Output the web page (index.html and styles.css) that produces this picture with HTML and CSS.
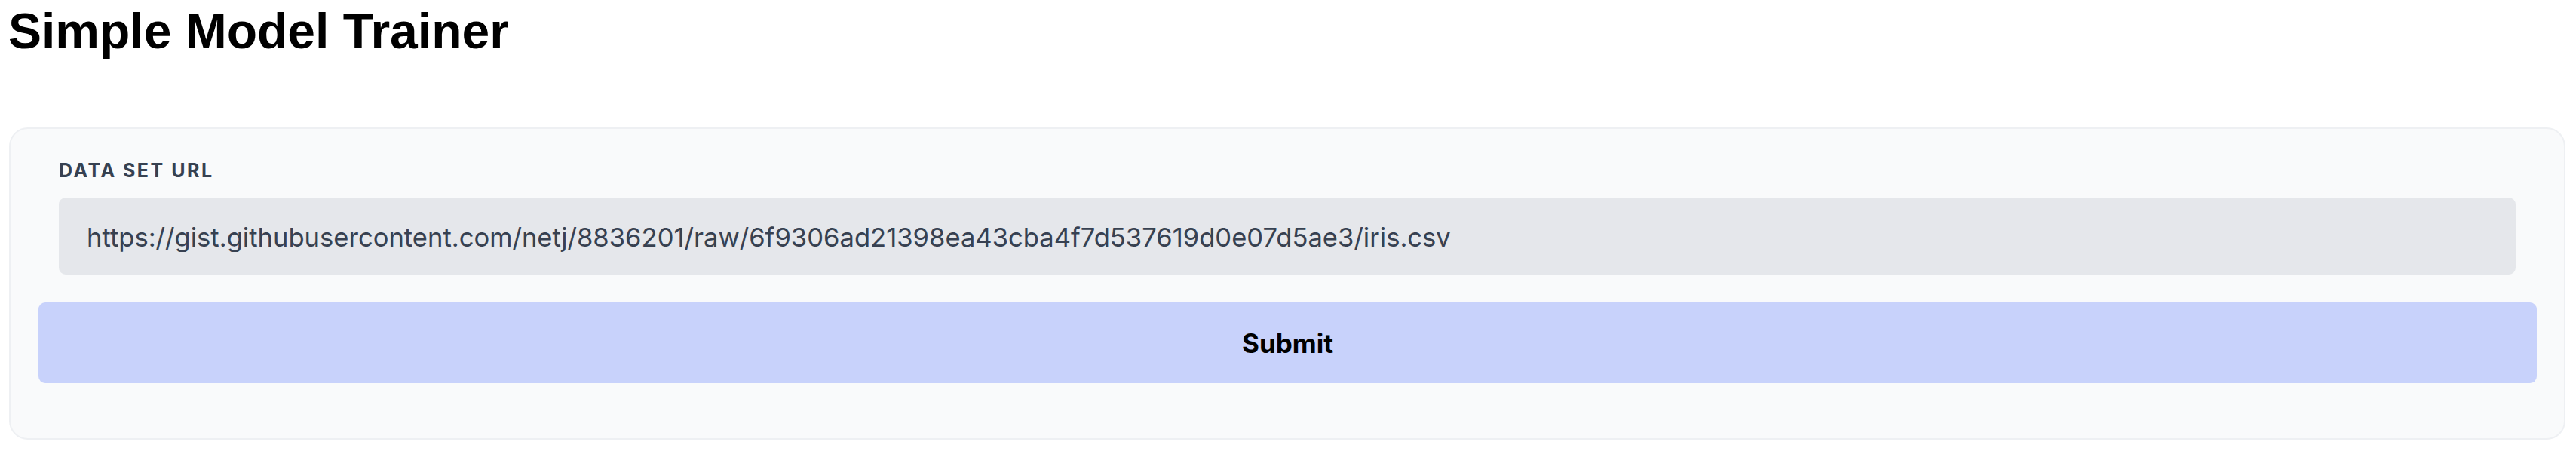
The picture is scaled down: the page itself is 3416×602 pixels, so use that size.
FILE: index.html
```html
<!DOCTYPE html>
<html lang="en">
<head>
<meta charset="utf-8">
<title>Simple Model Trainer</title>
<link rel="stylesheet" href="styles.css">
</head>
<body>
  <h1 class="title">Simple Model Trainer</h1>
  <form class="card">
    <div class="field">
      <label class="label" for="url">DATA SET URL</label>
      <input class="input" id="url" type="text" value="https://gist.githubusercontent.com/netj/8836201/raw/6f9306ad21398ea43cba4f7d537619d0e07d5ae3/iris.csv">
    </div>
    <button class="submit" type="button">Submit</button>
  </form>
</body>
</html>
```

FILE: styles.css
```css
html, body {
  background: #ffffff;
}
body {
  margin: 0;
  padding: 4px 14px 0 12px;
  font-family: Inter, "Noto Sans", sans-serif;
  color: #000;
}
.title {
  margin: 0 0 91px -1px;
  font-family: "Liberation Sans", Arial, sans-serif;
  font-weight: 700;
  font-size: 66px;
  line-height: 74px;
  color: #000;
}
.card {
  display: flex;
  flex-direction: column;
  background: #f9fafb;
  border: 2px solid #eef0f3;
  border-radius: 25px;
  padding: 40px 36px 73px 37px;
}
.field {
  display: flex;
  flex-direction: column;
  padding: 0 28px 0 27px;
}
.label {
  font-size: 25px;
  line-height: 30px;
  font-weight: 700;
  letter-spacing: 2.5px;
  color: #374151;
  margin-bottom: 21px;
}
.input {
  appearance: none;
  font-family: Inter, "Noto Sans", sans-serif;
  font-size: 34.6px;
  line-height: 40px;
  color: #374151;
  background: #e5e7eb;
  border: 2px solid #e5e7eb;
  border-radius: 9px;
  padding: 30px 32px 28px 35px;
  margin: 0 0 37px 0;
  outline: none;
}
.submit {
  appearance: none;
  height: 107px;
  border: none;
  border-radius: 9px;
  background: #c8d2fb;
  font-family: Inter, "Noto Sans", sans-serif;
  font-size: 35px;
  font-weight: 700;
  color: #000;
  padding: 0;
}
```
